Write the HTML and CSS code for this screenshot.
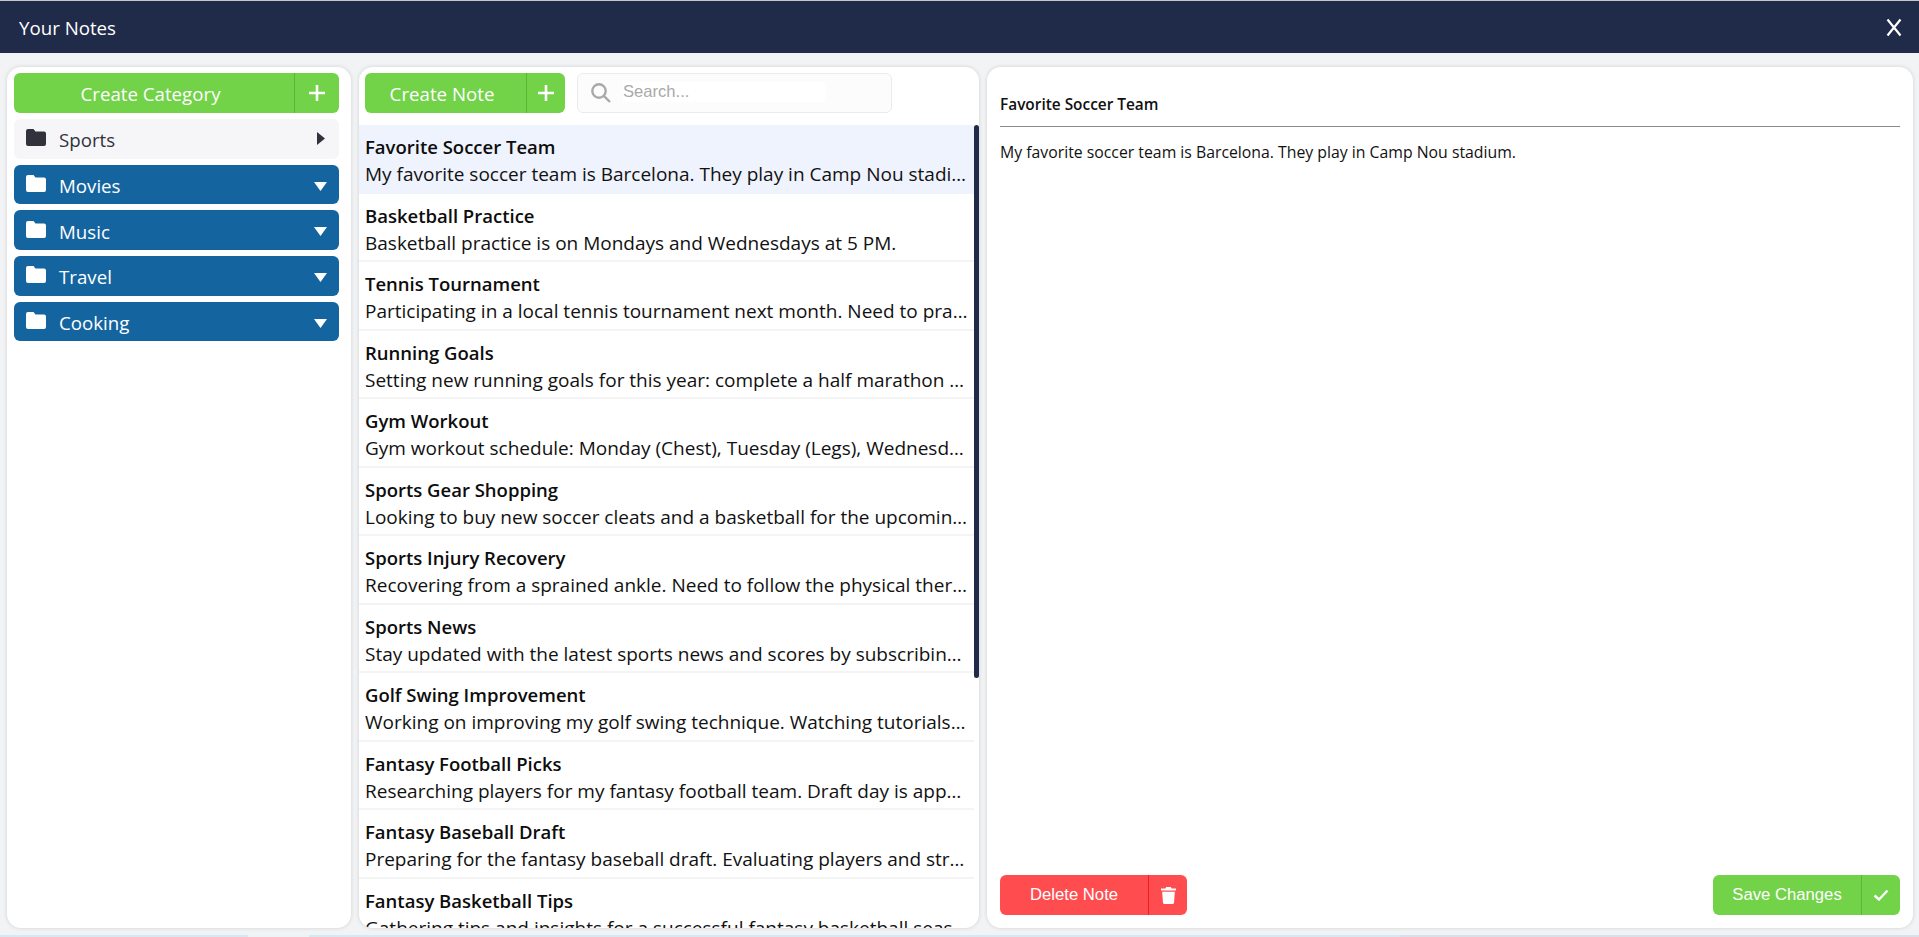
FILE: index.html
```html
<!DOCTYPE html>
<html lang="en">
<head>
  <meta charset="UTF-8">
  <meta name="viewport" content="width=device-width, initial-scale=1.0">
  <title>Your Notes</title>
  <link rel="stylesheet" href="styles.css">
</head>
<body>
  <header class="topbar">
    <span class="topbar-title">Your Notes</span>
    <svg class="close" viewBox="0 0 16 19"><path d="M1.5 1.5l13 16M14.5 1.5l-13 16"/></svg>
  </header>

  <main class="panels">
    <section class="panel categories">
      <div class="split-btn green wide">
        <span class="split-label">Create Category</span>
        <span class="split-icon"><svg class="plus" viewBox="0 0 16 16"><path d="M8 0v16M0 8h16"/></svg></span>
      </div>
      <div class="category open">
        <svg class="folder" viewBox="0 0 20 17"><path d="M2 0h5.5l2 2.4H18a2 2 0 0 1 2 2V15a2 2 0 0 1-2 2H2a2 2 0 0 1-2-2V2a2 2 0 0 1 2-2z"/></svg>
        <span class="category-name">Sports</span>
        <svg class="caret-right" viewBox="0 0 8 13"><path d="M0 0l8 6.5L0 13z"/></svg>
      </div>
      <div class="category">
        <svg class="folder" viewBox="0 0 20 17"><path d="M2 0h5.5l2 2.4H18a2 2 0 0 1 2 2V15a2 2 0 0 1-2 2H2a2 2 0 0 1-2-2V2a2 2 0 0 1 2-2z"/></svg>
        <span class="category-name">Movies</span>
        <svg class="caret-down" viewBox="0 0 13 9"><path d="M0 0h13L6.500 9z"/></svg>
      </div>
      <div class="category">
        <svg class="folder" viewBox="0 0 20 17"><path d="M2 0h5.5l2 2.4H18a2 2 0 0 1 2 2V15a2 2 0 0 1-2 2H2a2 2 0 0 1-2-2V2a2 2 0 0 1 2-2z"/></svg>
        <span class="category-name">Music</span>
        <svg class="caret-down" viewBox="0 0 13 9"><path d="M0 0h13L6.500 9z"/></svg>
      </div>
      <div class="category">
        <svg class="folder" viewBox="0 0 20 17"><path d="M2 0h5.5l2 2.4H18a2 2 0 0 1 2 2V15a2 2 0 0 1-2 2H2a2 2 0 0 1-2-2V2a2 2 0 0 1 2-2z"/></svg>
        <span class="category-name">Travel</span>
        <svg class="caret-down" viewBox="0 0 13 9"><path d="M0 0h13L6.500 9z"/></svg>
      </div>
      <div class="category">
        <svg class="folder" viewBox="0 0 20 17"><path d="M2 0h5.5l2 2.4H18a2 2 0 0 1 2 2V15a2 2 0 0 1-2 2H2a2 2 0 0 1-2-2V2a2 2 0 0 1 2-2z"/></svg>
        <span class="category-name">Cooking</span>
        <svg class="caret-down" viewBox="0 0 13 9"><path d="M0 0h13L6.500 9z"/></svg>
      </div>
    </section>

    <section class="panel notes">
      <div class="notes-toolbar">
        <div class="split-btn green note-btn">
          <span class="split-label">Create Note</span>
          <span class="split-icon"><svg class="plus" viewBox="0 0 16 16"><path d="M8 0v16M0 8h16"/></svg></span>
        </div>
        <div class="search">
          <svg class="search-icon" viewBox="0 0 20 20"><circle cx="8" cy="8" r="6.7"/><path d="M12.8 12.800L19 19"/></svg>
          <span class="search-text">Search...</span>
        </div>
      </div>
      <div class="note-list">
        <div class="scroll-thumb"></div>
        <article class="note selected">
          <h3>Favorite Soccer Team</h3>
          <p>My favorite soccer team is Barcelona. They play in Camp Nou stadium every home game.</p>
        </article>
        <article class="note">
          <h3>Basketball Practice</h3>
          <p>Basketball practice is on Mondays and Wednesdays at 5 PM.</p>
        </article>
        <article class="note">
          <h3>Tennis Tournament</h3>
          <p>Participating in a local tennis tournament next month. Need to practice my serve.</p>
        </article>
        <article class="note">
          <h3>Running Goals</h3>
          <p>Setting new running goals for this year: complete a half marathon by the end of summer.</p>
        </article>
        <article class="note">
          <h3>Gym Workout</h3>
          <p>Gym workout schedule: Monday (Chest), Tuesday (Legs), Wednesday (Back), Thursday (Arms).</p>
        </article>
        <article class="note">
          <h3>Sports Gear Shopping</h3>
          <p>Looking to buy new soccer cleats and a basketball for the upcoming season at the store.</p>
        </article>
        <article class="note">
          <h3>Sports Injury Recovery</h3>
          <p>Recovering from a sprained ankle. Need to follow the physical therapy routine every day.</p>
        </article>
        <article class="note">
          <h3>Sports News</h3>
          <p>Stay updated with the latest sports news and scores by subscribing to the newsletter.</p>
        </article>
        <article class="note">
          <h3>Golf Swing Improvement</h3>
          <p>Working on improving my golf swing technique. Watching tutorials and practicing weekly.</p>
        </article>
        <article class="note">
          <h3>Fantasy Football Picks</h3>
          <p>Researching players for my fantasy football team. Draft day is approaching very quickly.</p>
        </article>
        <article class="note">
          <h3>Fantasy Baseball Draft</h3>
          <p>Preparing for the fantasy baseball draft. Evaluating players and strategies for the season.</p>
        </article>
        <article class="note">
          <h3>Fantasy Basketball Tips</h3>
          <p>Gathering tips and insights for a successful fantasy basketball season with my friends.</p>
        </article>
      </div>
    </section>

    <section class="panel editor">
      <h2 class="editor-title">Favorite Soccer Team</h2>
      <p class="editor-body">My favorite soccer team is Barcelona. They play in Camp Nou stadium.</p>
      <div class="editor-actions">
        <div class="split-btn red action-btn">
          <span class="split-label">Delete Note</span>
          <span class="split-icon"><svg class="trash" viewBox="0 0 16 18"><path d="M5.500 0h5l.7 1.600H16v2H0v-2h4.800zM1.200 5h13.600l-.9 11.400A1.800 1.800 0 0 1 12.100 18H3.900a1.800 1.800 0 0 1-1.800-1.600z"/></svg></span>
        </div>
        <div class="split-btn green action-btn">
          <span class="split-label">Save Changes</span>
          <span class="split-icon"><svg class="check" viewBox="0 0 16 12"><path d="M1.500 6.500l4.500 4L14.500 1.500"/></svg></span>
        </div>
      </div>
    </section>
  </main>

  <div class="bottom-strip"></div>
</body>
</html>
```

FILE: styles.css
```css
* {
  box-sizing: border-box;
}

html, body {
  height: 100%;
}

body {
  margin: 0;
  display: flex;
  flex-direction: column;
  overflow: hidden;
  background: #f2f3f5;
  font-family: 'Open Sans', 'Noto Sans', sans-serif;
  color: #111;
}

/* top bar */
.topbar {
  height: 53px;
  flex: none;
  display: flex;
  align-items: center;
  justify-content: space-between;
  padding: 0 17px 0 19px;
  background: #1f2b49;
  border-top: 1px solid #c8c8c8;
  color: #fff;
}

.topbar-title {
  font-size: 18.7px;
}

.close {
  width: 16px;
  height: 19px;
  fill: none;
  stroke: #fff;
  stroke-width: 2.2;
}

/* three columns */
.panels {
  flex: 1;
  min-height: 0;
  display: flex;
  gap: 8px;
  padding: 14px 6px 7px 7px;
}

.panel {
  background: #fff;
  border-radius: 14px;
  box-shadow: 0 0 4px rgba(0, 0, 0, 0.14);
  overflow: hidden;
}

.categories {
  width: 344px;
  flex: none;
  padding: 6px 12px 0 7px;
  display: flex;
  flex-direction: column;
  gap: 6px;
}

.notes {
  width: 620px;
  flex: none;
  display: flex;
  flex-direction: column;
}

.editor {
  flex: 1;
  display: flex;
  flex-direction: column;
  padding: 27px 13px 13px 13px;
}

/* split buttons */
.split-btn {
  height: 40px;
  flex: none;
  display: flex;
  border-radius: 6px;
  color: #fff;
  overflow: hidden;
}

.split-label {
  flex: 1;
  display: flex;
  align-items: center;
  justify-content: center;
  font-size: 18.7px;
}

.split-icon {
  width: 39px;
  flex: none;
  display: flex;
  align-items: center;
  justify-content: center;
  border-left: 1px solid;
}

.green {
  background: #72d248;
}

.green .split-icon {
  border-color: #5cb535;
}

.red {
  background: #ff4d4f;
}

.red .split-icon {
  border-color: #f01d20;
}

.wide .split-icon {
  width: 45px;
}

.wide .split-label,
.note-btn .split-label {
  padding-right: 7px;
}

.plus {
  width: 16px;
  height: 16px;
  fill: none;
  stroke: #fff;
  stroke-width: 2.6;
}

.trash {
  width: 15px;
  height: 17px;
  fill: #fff;
}

.check {
  width: 16px;
  height: 12px;
  fill: none;
  stroke: #fff;
  stroke-width: 2.4;
}

/* categories */
.category {
  height: 39.7px;
  flex: none;
  display: flex;
  align-items: center;
  padding: 0 12px;
  border-radius: 6px;
  background: #14659f;
  color: #fff;
  font-size: 18.7px;
}

.category.open {
  background: #f6f6f9;
  color: #32323c;
  padding-right: 14px;
}

.folder {
  width: 20px;
  height: 17px;
  flex: none;
  margin: -2px 13px 0 0;
  fill: currentColor;
}

.category-name {
  flex: 1;
  padding-top: 2px;
}

.caret-down {
  width: 13px;
  height: 9px;
  margin-top: 3px;
  fill: #fff;
}

.caret-right {
  width: 8px;
  height: 13px;
  fill: #32323c;
}

/* notes column */
.notes-toolbar {
  flex: none;
  display: flex;
  gap: 12px;
  padding: 6px 0 12px 6px;
}

.note-btn {
  width: 200px;
}

.search {
  width: 315px;
  height: 40px;
  display: flex;
  align-items: center;
  gap: 12px;
  padding: 0 13px;
  background: #fcfcfc;
  border: 1px solid #ebebeb;
  border-radius: 6px;
}

.search-icon {
  width: 20px;
  height: 20px;
  flex: none;
  margin-bottom: 1px;
  fill: none;
  stroke: #a9a9a9;
  stroke-width: 2.4;
}

.search-text {
  width: 203px;
  height: 20px;
  margin-bottom: 3px;
  background: #fff;
  font-family: 'Liberation Sans', Arial, sans-serif;
  font-size: 16.6px;
  line-height: 20px;
  color: #a9a9a9;
}

.note-list {
  position: relative;
  flex: 1;
  min-height: 0;
  padding-right: 5px;
  overflow: hidden;
}

.scroll-thumb {
  position: absolute;
  top: 0;
  right: 0;
  width: 5px;
  height: 553px;
  border-radius: 3px;
  background: #1f2b49;
}

.note {
  height: 68.55px;
  padding: 10px 5px 0 6px;
  border-bottom: 2px solid #f4f4f4;
}

.note.selected {
  background: #eff3fd;
  border-bottom-color: #eff3fd;
}

.note h3 {
  margin: 0;
  font-size: 18.5px;
  line-height: 24px;
  font-weight: 600;
  color: #0d0d0d;
}

.note p {
  margin: 3px 0 0;
  font-size: 19px;
  line-height: 24px;
  white-space: nowrap;
  overflow: hidden;
  text-overflow: ellipsis;
}

/* editor */
.editor-title {
  margin: 0;
  padding-bottom: 11px;
  border-bottom: 1px solid #8a8a8a;
  font-size: 15.4px;
  line-height: 21px;
  font-weight: 600;
}

.editor-body {
  flex: 1;
  margin: 15px 0 0;
  font-size: 15.8px;
  line-height: 21px;
}

.editor-actions {
  display: flex;
  justify-content: space-between;
}

.action-btn {
  width: 187px;
}

.action-btn .split-label {
  font-family: 'Liberation Sans', Arial, sans-serif;
  font-size: 16.7px;
}

.bottom-strip {
  height: 2px;
  flex: none;
  background: linear-gradient(to right, #d6e8f2 248px, #edf4f8 248px, #edf4f8 309px, #d6e8f2 309px, #d6e8f2 1400px, #d9e0ec 1400px);
}
```
